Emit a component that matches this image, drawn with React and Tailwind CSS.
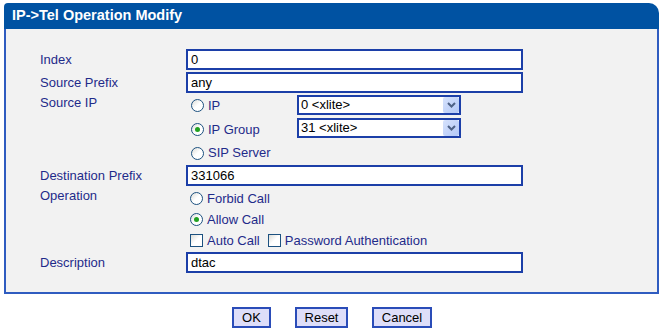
import React from "react";

const font = { fontFamily: '"Liberation Sans", Arial, sans-serif' };

function Radio({ checked }) {
  return (
    <span className="relative inline-flex h-[13px] w-[13px] shrink-0 items-center justify-center rounded-full border border-[#1c5180] bg-gradient-to-br from-[#dcdcd7] via-white to-white">
      {checked && (
        <span className="h-[5px] w-[5px] rounded-full bg-[#21a121]" />
      )}
    </span>
  );
}

function Check() {
  return (
    <span className="inline-block h-[13px] w-[13px] shrink-0 border border-[#1c5180] bg-gradient-to-br from-[#dcdcd7] via-white to-white" />
  );
}

function TextInput({ value }) {
  return (
    <div className="flex h-[21px] w-[337px] items-center border-2 border-[#1c3fa8] bg-white pl-[3px] text-[13px] text-black">
      {value}
    </div>
  );
}

function Select({ value }) {
  return (
    <div className="flex h-[20px] w-[164px] items-center justify-between border-2 border-[#1c3fa8] bg-white pl-[2px] pr-[0px] text-[13px] text-black">
      <span>{value}</span>
      <span className="flex h-[16px] w-[16px] items-center justify-center rounded-[2px] bg-gradient-to-br from-[#d6e2fc] to-[#b3c8f7]">
        <svg width="9" height="6" viewBox="0 0 9 6">
          <path d="M1 1 L4.5 4.5 L8 1" fill="none" stroke="#4d6185" strokeWidth="2" />
        </svg>
      </span>
    </div>
  );
}

function Label({ children, top }) {
  return (
    <div
      className={
        "w-[146px] shrink-0 text-[13px] leading-[15px] text-[#1f2b8a] " +
        (top ? "pt-0" : "")
      }
    >
      {children}
    </div>
  );
}

function Option({ checked, children, type = "radio" }) {
  return (
    <span className="flex items-center gap-[4px] text-[13px] text-[#1f2b8a]">
      {type === "radio" ? <Radio checked={checked} /> : <Check />}
      <span>{children}</span>
    </span>
  );
}

function Button({ children, w }) {
  return (
    <button
      className={
        "flex h-[21px] items-center justify-center border-2 border-[#2a4cb8] bg-[#dedef9] text-[13px] text-black " +
        w
      }
    >
      {children}
    </button>
  );
}

export default function App() {
  return (
    <div className="h-[330px] w-[663px] bg-white" style={font}>
      <div className="ml-[4px] pt-[3px] w-[655px]">
        <div className="flex h-[26px] items-center rounded-tl-[4px] rounded-tr-[10px] bg-[#0052a2] pl-[8px] text-[14.5px] font-bold text-white">
          IP-&gt;Tel Operation Modify
        </div>
        <div className="h-[265px] border-2 border-t-0 border-[#2f5cc0] bg-[#f2f2f2] pl-[34px] pt-[20px]">
          {/* Index */}
          <div className="flex h-[23px] items-start">
            <div className="flex h-[21px] items-center">
              <Label>Index</Label>
            </div>
            <TextInput value="0" />
          </div>
          {/* Source Prefix */}
          <div className="flex h-[23px] items-start">
            <div className="flex h-[21px] items-center">
              <Label>Source Prefix</Label>
            </div>
            <TextInput value="any" />
          </div>
          {/* Source IP */}
          <div className="flex h-[70px] items-start">
            <Label top>Source IP</Label>
            <div className="flex flex-col">
              <div className="flex h-[23px] items-start">
                <div className="flex h-[20px] w-[111px] items-center pl-[5px] pt-[1px]">
                  <Option>IP</Option>
                </div>
                <Select value="0 <xlite>" />
              </div>
              <div className="flex h-[23px] items-start">
                <div className="flex h-[20px] w-[111px] items-center pl-[5px] pt-[3px]">
                  <Option checked>IP Group</Option>
                </div>
                <Select value="31 <xlite>" />
              </div>
              <div className="flex h-[24px] items-center pl-[5px]">
                <Option>SIP Server</Option>
              </div>
            </div>
          </div>
          {/* Destination Prefix */}
          <div className="flex h-[23px] items-start">
            <div className="flex h-[21px] items-center">
              <Label>Destination Prefix</Label>
            </div>
            <TextInput value="331066" />
          </div>
          {/* Operation */}
          <div className="flex h-[64px] items-start">
            <Label top>Operation</Label>
            <div className="flex flex-col pl-[4px]">
              <div className="flex h-[21px] items-center">
                <Option>Forbid Call</Option>
              </div>
              <div className="flex h-[21px] items-center">
                <Option checked>Allow Call</Option>
              </div>
              <div className="flex h-[21px] items-center gap-[8px]">
                <Option type="check">Auto Call</Option>
                <Option type="check">Password Authentication</Option>
              </div>
            </div>
          </div>
          {/* Description */}
          <div className="flex h-[23px] items-start">
            <div className="flex h-[21px] items-center">
              <Label>Description</Label>
            </div>
            <TextInput value="dtac" />
          </div>
        </div>
      </div>
      <div className="mt-[13px] flex justify-center gap-[24px] pl-[1px]">
        <Button w="w-[39px]">OK</Button>
        <Button w="w-[53px]">Reset</Button>
        <Button w="w-[60px]">Cancel</Button>
      </div>
    </div>
  );
}
